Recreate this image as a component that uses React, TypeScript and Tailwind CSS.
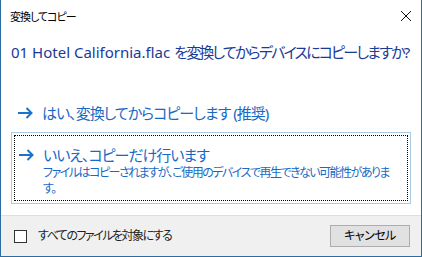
const Arrow = () => (
  <svg width="16" height="12" viewBox="0 0 16 12" className="shrink-0">
    <path d="M1 6 H14.5 M9.5 1 L14.5 6 L9.5 11" fill="none" stroke="#1a73c9" strokeWidth="2" />
  </svg>
)

const App = () => {
  const font = "font-['Noto_Sans','Noto_Sans_CJK_JP',sans-serif] [font-feature-settings:'palt']"

  return (
    <div className={`w-[422px] h-[257px] bg-white border-x border-b border-[#2b6ca3] flex flex-col ${font}`}>
      {/* title bar */}
      <div className="h-[32px] flex items-center justify-between pl-[9px] pr-[9px] shrink-0">
        <span className="text-[11px] tracking-[-1px] text-black leading-none">変換してコピー</span>
        <svg width="12" height="12" viewBox="0 0 12 12">
          <path d="M1 1 L11 11 M11 1 L1 11" stroke="#111" strokeWidth="1" />
        </svg>
      </div>

      <div className="flex-1 flex flex-col">
        <p className="mt-[10px] ml-[10px] h-[20px] leading-[20px] text-[15px] text-[#1a3a99] whitespace-nowrap">
          01 Hotel California.flac <span className="tracking-[-1.8px]">を変換してからデバイスにコピーしますか?</span>
        </p>

        <div className="mt-[33px] mx-[10px] h-[36px] border border-transparent p-[2px]">
          <div className="h-full flex items-center gap-[9px] pl-[3px]">
            <Arrow />
            <span className="text-[15px] leading-[18px] tracking-[-1px] text-[#1769c4] whitespace-nowrap">
              はい、変換してからコピーします (推奨)
            </span>
          </div>
        </div>

        <div className="mt-[1px] mx-[10px] h-[72px] border border-[#a9cbe8] p-[2px]">
          <div className="h-full border border-dotted border-black pt-[10px] pl-[3px]">
            <div className="flex items-center gap-[9px] h-[18px]">
              <Arrow />
              <span className="text-[15px] leading-[18px] tracking-[-1px] text-[#1769c4] whitespace-nowrap">
                いいえ、コピーだけ行います
              </span>
            </div>
            <p className="mt-[1px] ml-[25px] text-[12px] leading-[16px] tracking-[-1.5px] text-[#1769c4] whitespace-nowrap">
              ファイルはコピーされますが、ご使用のデバイスで再生できない可能性がありま
              <br />
              す。
            </p>
          </div>
        </div>
      </div>

      {/* footer */}
      <div className="h-[41px] shrink-0 bg-[#f0f0f0] border-t border-[#dfdfdf] flex items-center justify-between pl-[13px] pr-[11px]">
        <label className="flex items-center gap-[11px]">
          <span className="w-[13px] h-[13px] border border-[#333] bg-white" />
          <span className="text-[12px] tracking-[-1.5px] text-[#222]">すべてのファイルを対象にする</span>
        </label>
        <button className="w-[80px] h-[22px] bg-[#e1e1e1] border border-[#adadad] text-[12px] tracking-[-0.5px] text-black leading-none">
          キャンセル
        </button>
      </div>
    </div>
  )
}

export default App
